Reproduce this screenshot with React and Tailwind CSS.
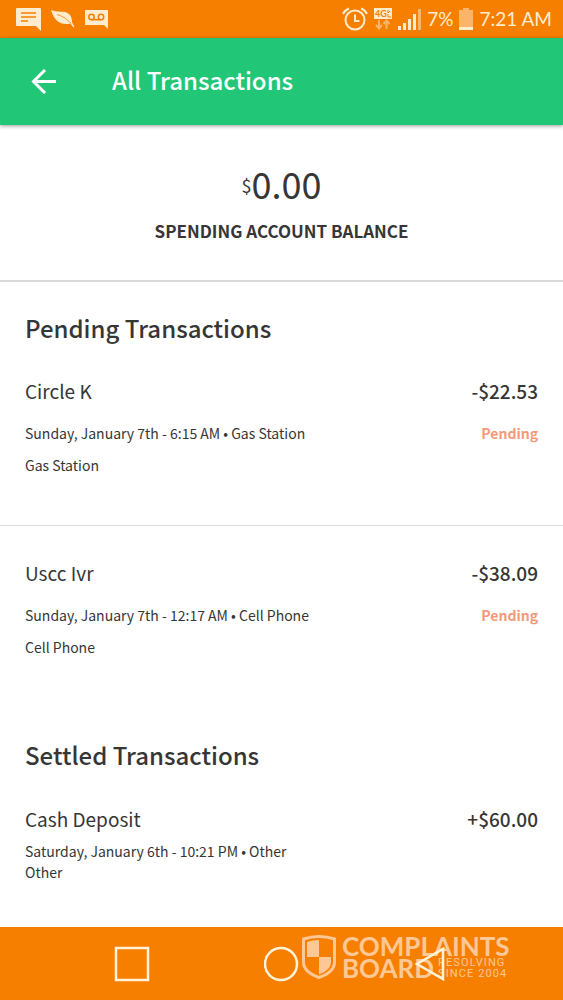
const pending = [
  {
    name: "Circle K",
    amount: "-$22.53",
    details: "Sunday, January 7th - 6:15 AM • Gas Station",
    category: "Gas Station",
  },
  {
    name: "Uscc Ivr",
    amount: "-$38.09",
    details: "Sunday, January 7th - 12:17 AM • Cell Phone",
    category: "Cell Phone",
  },
];

const settled = [
  {
    name: "Cash Deposit",
    amount: "+$60.00",
    details: "Saturday, January 6th - 10:21 PM • Other",
    category: "Other",
  },
];

function StatusBar() {
  return (
    <div className="flex h-[38px] items-center justify-between bg-[#f77f00] pr-[11px] pl-4 text-[#ffeccf]">
      <div className="flex items-center gap-[10px]">
        <svg className="h-[23px] w-[25px]" viewBox="0 0 25 23" fill="currentColor">
          <path d="M1 0H24Q25 0 25 1V23L20 18H1Q0 18 0 17V1Q0 0 1 0Z" />
          <path d="M5 5H20M5 9H20M5 13H12" stroke="#f77f00" strokeWidth="1.3" />
        </svg>
        <svg className="h-[18px] w-6" viewBox="0 0 24 18" fill="currentColor">
          <path d="M0 0C6 3 13 0 18 4C20.500 6 21 9 21 12L23.500 17L22.500 17.500L19.500 13.500C13 15 4 14 0 0Z" />
          <path d="M6 4.500C11 6 15 8 20 13.500" stroke="#f77f00" strokeWidth="0.8" fill="none" />
        </svg>
        <svg className="h-[19px] w-[23px]" viewBox="0 0 23 19">
          <path d="M0 0H23V19L19 15H0Z" fill="currentColor" />
          <g fill="none" stroke="#f77f00" strokeWidth="1.500">
            <circle cx="6.500" cy="7" r="2.700" />
            <circle cx="16" cy="7" r="2.700" />
            <path d="M6.500 9.700H16" />
          </g>
        </svg>
      </div>

      <div className="flex items-center gap-[6px] font-['Lato',sans-serif] text-[19px] leading-6">
        <svg className="h-[25px] w-[26px]" viewBox="0 0 26 25" fill="none" stroke="currentColor" strokeWidth="2">
          <circle cx="13" cy="13" r="9.500" />
          <path d="M13 7.500V14H17.500M1 7Q3 3 7 1.500M25 7Q23 3 19 1.500" />
        </svg>
        <svg className="h-[22px] w-[18px]" viewBox="0 0 18 22">
          <rect width="18" height="11" fill="currentColor" />
          <text x="1" y="9" fontSize="9" fontWeight="700" fill="#f77f00">
            4G
          </text>
          <path d="M14 2V5L16 3M14 6V9H17" stroke="#f77f00" fill="none" />
          <path d="M5 12V20M2 17L5 20.500L8 17M12.500 21V13M9.500 16L12.500 12.500L15.500 16" stroke="#fbb56a" strokeWidth="2" fill="none" />
        </svg>
        <svg className="h-[21px] w-[23px]" viewBox="0 0 23 21" fill="currentColor">
          <path d="M0 17H3V21H0ZM5 14H8V21H5ZM10 10H13V21H10ZM15 5H18V21H15Z" />
          <path d="M20 0H23V21H20Z" fill="#fbb56a" />
        </svg>
        <span>7%</span>
        <svg className="h-[22px] w-[14px]" viewBox="0 0 14 22">
          <path d="M4 0H10V2H14V22H0V2H4Z" fill="#fbb56a" />
          <path d="M0 19H14V22H0Z" fill="currentColor" />
        </svg>
        <span>7:21 AM</span>
      </div>
    </div>
  );
}

function Transaction({ item, isPending }) {
  return (
    <li className={isPending ? "border-b border-[#dcdcdc] px-[25px] pt-[31px] pb-11 last:border-0" : "px-[25px] pt-8 pb-10"}>
      <div className="flex justify-between text-[19px] leading-8">
        <h3>{item.name}</h3>
        <span className="font-medium">{item.amount}</span>
      </div>
      <div className={isPending ? "mt-[10px] text-[14px] leading-8" : "mt-[6px] text-[14px] leading-[21px]"}>
        <div className="flex justify-between">
          <p>{item.details}</p>
          {isPending && <span className="font-bold text-[#f39a78]">Pending</span>}
        </div>
        <p>{item.category}</p>
      </div>
    </li>
  );
}

function Watermark() {
  return (
    <div className="pointer-events-none absolute top-2 left-[302px] flex items-start gap-[6px] font-['Lato',sans-serif] text-[#fdc896]">
      <svg className="h-11 w-[34px]" viewBox="0 0 34 44">
        <path d="M1.500 4Q17 -1 32.500 4V27Q32.500 37 17 42.500Q1.500 37 1.500 27Z" fill="none" stroke="currentColor" strokeWidth="3" />
        <path d="M5 7Q11 5 17 5V22H5ZM17 22H29V27Q29 35 17 39.500Z" fill="currentColor" />
      </svg>
      <div className="font-bold">
        <p className="text-[26px] leading-[22px]">COMPLAINTS</p>
        <div className="flex items-start gap-1">
          <p className="text-[26px] leading-[22px]">BOARD</p>
          <p className="font-['Roboto',sans-serif] text-[11px] leading-[11px] font-normal tracking-widest">
            RESOLVING
            <br />
            SINCE 2004
          </p>
        </div>
      </div>
    </div>
  );
}

function NavBar() {
  return (
    <nav className="relative mt-auto flex h-[73px] items-center justify-between bg-[#f77f00] px-[114px] text-[#fff3d9]">
      <button type="button" aria-label="Recent apps">
        <svg className="size-9" viewBox="0 0 36 36" fill="none" stroke="currentColor" strokeWidth="2.5">
          <rect x="2" y="2" width="32" height="32" />
        </svg>
      </button>
      <button type="button" aria-label="Home">
        <svg className="size-9" viewBox="0 0 36 36" fill="none" stroke="currentColor" strokeWidth="2.5">
          <circle cx="17" cy="18" r="16" />
        </svg>
      </button>
      <Watermark />
      <button type="button" aria-label="Back" className="relative">
        <svg className="size-9" viewBox="0 0 36 36" fill="none" stroke="currentColor" strokeWidth="2.5">
          <path d="M30 3V33L4 18Z" />
        </svg>
      </button>
    </nav>
  );
}

export default function App() {
  return (
    <div className="flex min-h-screen flex-col bg-white font-['Noto_Sans_CJK_JP',sans-serif] text-[#363636]">
      <StatusBar />
      <header className="relative flex h-[87px] items-center gap-14 bg-[#21c677] px-[31px] text-white shadow-[0_1px_4px_rgba(0,0,0,0.4)]">
        <button type="button" aria-label="Back">
          <svg className="size-[25px]" viewBox="0 0 25 25" fill="none" stroke="currentColor" strokeWidth="3">
            <path d="M25 12.500H2M14 1L2.500 12.500L14 24" />
          </svg>
        </button>
        <h1 className="pb-1 text-[24px] leading-8 font-medium">All Transactions</h1>
      </header>

      <section className="border-b-2 border-[#dadada] pt-[34px] pb-[37px] text-center">
        <p className="text-[36px] leading-[48px]">
          <span className="align-[6px] text-[18px] leading-none">$</span>0.00
        </p>
        <h2 className="mt-3 text-[17px] leading-6 font-bold">SPENDING ACCOUNT BALANCE</h2>
      </section>

      <main>
        <h2 className="px-[25px] pt-[30px] text-[24px] leading-8 font-medium">Pending Transactions</h2>
        <ul>
          {pending.map((item) => (
            <Transaction key={item.name} item={item} isPending />
          ))}
        </ul>
        <h2 className="px-[25px] pt-8 text-[24px] leading-8 font-medium">Settled Transactions</h2>
        <ul>
          {settled.map((item) => (
            <Transaction key={item.name} item={item} />
          ))}
        </ul>
      </main>

      <NavBar />
    </div>
  );
}
